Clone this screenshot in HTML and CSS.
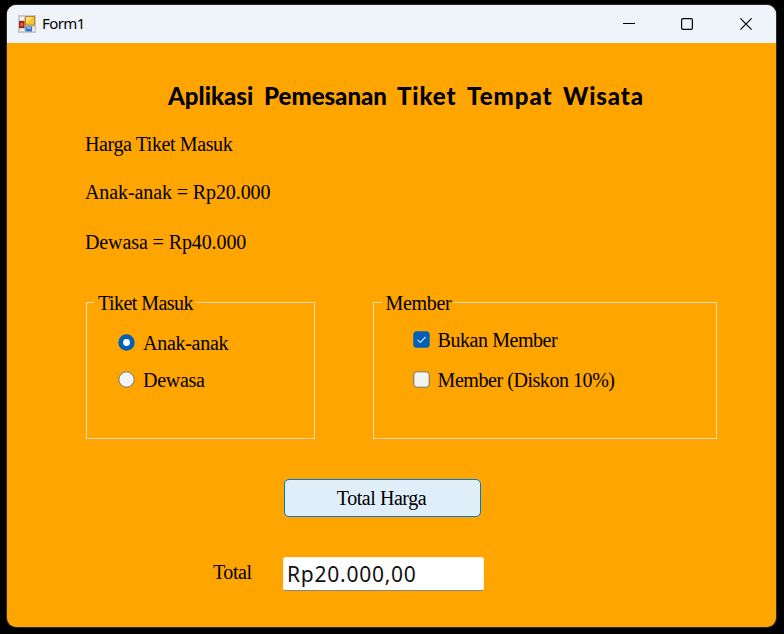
FILE: index.html
```
<!DOCTYPE html>
<html lang="id">
<head>
<meta charset="utf-8">
<title>Form1</title>
<link rel="stylesheet" href="styles.css">
</head>
<body>
<div class="window">
  <header class="titlebar">
    <svg class="app-icon" width="18" height="18" viewBox="0 0 18 18">
      <rect width="18" height="18" fill="#c9c9c9"/>
      <path d="M2 2h4v3H2zM2 14h4v2H2zM14.500 12h2v4h-2z" fill="#f5f5f5"/>
      <rect x="7" y="1" width="10" height="9.500" fill="#b98a1c"/>
      <rect x="8" y="2" width="8" height="7.500" fill="#f6c62f"/>
      <path d="M8 2h7L8 8z" fill="#fbdf7c"/>
      <rect x="1" y="6" width="5.500" height="7" fill="#a32620"/>
      <rect x="2.500" y="8" width="2.500" height="3" fill="#df6b55"/>
      <rect x="7.500" y="11.500" width="6.500" height="5" fill="#3d70cc"/>
      <rect x="8.500" y="12" width="4.500" height="2" fill="#79a8ee"/>
    </svg>
    <span class="caption">Form1</span>
    <div class="controls">
      <svg width="12" height="12" viewBox="0 0 12 12"><path d="M0 5.500h12"/></svg>
      <svg width="12" height="12" viewBox="0 0 12 12"><rect x=".6" y=".6" width="10.800" height="10.800" rx="1.300"/></svg>
      <svg width="12" height="12" viewBox="0 0 12 12"><path d="M.4.400l11.200 11.200M11.600.4L.4 11.600"/></svg>
    </div>
  </header>
  <main class="form">
    <h1 class="title"><span class="w1">Aplikasi</span> <span class="w2">Pemesanan</span> <span class="w3">Tiket</span> <span class="w4">Tempat</span> <span class="w5">Wisata</span></h1>
    <div class="prices">
      <p class="heading">Harga Tiket Masuk</p>
      <p>Anak-anak = Rp20.000</p>
      <p>Dewasa = Rp40.000</p>
    </div>
    <div class="groups">
      <fieldset class="group ticket">
        <legend>Tiket Masuk</legend>
        <label class="option"><svg width="17" height="17" viewBox="0 0 17 17"><circle cx="8.500" cy="8.500" r="8.200" fill="#005fb8"/><circle cx="8.500" cy="8.500" r="3.400" fill="#fff"/></svg><span>Anak-anak</span></label>
        <label class="option"><svg width="17" height="17" viewBox="0 0 17 17"><circle cx="8.500" cy="8.500" r="7.700" fill="#f3f3f3" stroke="#77705f"/></svg><span>Dewasa</span></label>
      </fieldset>
      <fieldset class="group member">
        <legend>Member</legend>
        <label class="option"><svg width="17" height="17" viewBox="0 0 17 17"><rect x=".3" y=".3" width="16.400" height="16.400" rx="3.500" fill="#005fb8"/><path d="M4.500 8.700l2.800 2.700 5.200-5.400" fill="none" stroke="#d7e9fa" stroke-width="1.100"/></svg><span>Bukan Member</span></label>
        <label class="option"><svg width="17" height="17" viewBox="0 0 17 17"><rect x=".8" y=".8" width="15.400" height="15.400" rx="3" fill="#f3f3f3" stroke="#77705f"/></svg><span>Member (Diskon 10%)</span></label>
      </fieldset>
    </div>
    <button class="calculate">Total Harga</button>
    <div class="result">
      <label for="total">Total</label>
      <input id="total" type="text" value="Rp20.000,00">
    </div>
  </main>
</div>
</body>
</html>
```
FILE: styles.css
```
* { box-sizing: border-box; }
body {
  margin: 0;
  height: 634px;
  padding: 5px 8px 7px 7px;
  background: #000;
  color: #000;
  font: 20px/24px "Liberation Serif", "Times New Roman", serif;
  letter-spacing: -0.45px;
  overflow: hidden;
}
.window {
  height: 622px;
  border-radius: 9px;
  overflow: hidden;
  background: #ffa500;
  box-shadow: 0 0 0 1px #2b2b2b;
}
.titlebar {
  display: flex;
  align-items: center;
  height: 38px;
  padding: 0 24px 0 11px;
  background: #eff4fb;
}
.caption {
  margin: -2px 0 0 6px;
  font: 15px/20px "Noto Sans", sans-serif;
  letter-spacing: -0.6px;
}
.controls {
  display: flex;
  gap: 46px;
  margin-left: auto;
}
.controls svg { fill: none; stroke: #000; stroke-width: 1.2; }
.controls svg:nth-child(-n+2) { margin-left: -1px; }
.controls svg:nth-child(2) { margin: 0 1px 0 0; }
.form { padding: 36px 59px 0 78px; }
.title {
  display: grid;
  grid-template-columns: 96px 133px 70px 96px 81px;
  height: 34px;
  margin: 0 0 0 83px;
  font: 900 24px/34px "Comic Sans MS", Lato, sans-serif;
  letter-spacing: 0;
}
.w3, .w5 { letter-spacing: 0.9px; }
.w4 { letter-spacing: 1px; }
.prices { padding-top: 19px; }
.prices p { margin: 0 0 24px; letter-spacing: -0.1px; }
.prices .heading { letter-spacing: -0.4px; }
.prices p + p { margin-bottom: 26px; }
.groups { display: flex; gap: 58px; margin: 36px 0 0 1px; }
.group {
  height: 149px;
  margin: 0;
  padding: 16px 0 0 31px;
  border: 1px solid #eedcb8;
}
.ticket { width: 229px; }
.member { width: 345px; padding: 13px 0 0 39px; }
legend { margin-left: -23px; padding: 2px 3px 0 4px; line-height: 22px; }
.ticket legend { margin-left: -24px; letter-spacing: -0.55px; }
.member legend { margin-left: -31px; letter-spacing: -0.35px; }
.option { display: flex; align-items: center; gap: 8px; height: 24px; }
.option + .option { margin-top: 13px; }
.member .option + .option { margin-top: 16px; }
.option span { padding-top: 1px; }
.ticket .option span { letter-spacing: -0.28px; }
.calculate {
  display: block;
  width: 197px;
  height: 38px;
  margin: 40px 0 0 199px;
  padding: 0 2px 0 0;
  border: 1px solid #0078d4;
  border-radius: 5px;
  background: #e0eef9;
  color: #000;
  font: inherit;
  letter-spacing: inherit;
}
.result { display: flex; margin: 40px 0 0 128px; }
.result label { width: 70px; padding-top: 3px; }
.result input {
  width: 201px;
  height: 34px;
  padding: 0 3px 1px;
  border: 1px solid #fbf4e6;
  border-bottom-color: #868686;
  border-radius: 3px;
  background: #fff;
  color: #111;
  font: 21px/30px "Noto Sans", sans-serif;
  letter-spacing: 0.75px;
}
```
